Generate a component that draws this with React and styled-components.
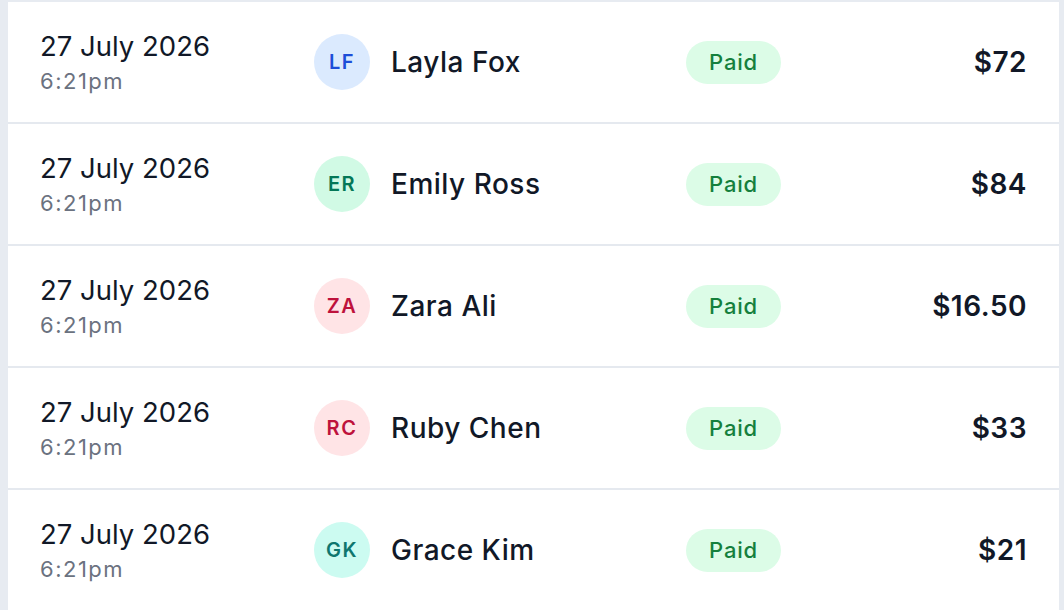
import React from "react";
import styled, { createGlobalStyle } from "styled-components";

const GlobalStyle = createGlobalStyle`
  html, body {
    margin: 0;
    padding: 0;
    background: #e7ebf1;
    font-family: Inter, "Noto Sans", sans-serif;
  }
`;

const Page = styled.div`
  padding: 2px 5px 0 8px;
  height: 610px;
  box-sizing: border-box;
  overflow: hidden;
`;

const Table = styled.div`
  background: #ffffff;
`;

const Row = styled.div`
  display: grid;
  grid-template-columns: 274px 372px 1fr auto;
  align-items: center;
  height: 120px;
  padding: 0 32px;
  border-bottom: 2px solid #e5e9ef;
`;

const DateCell = styled.div`
  display: flex;
  flex-direction: column;
  gap: 4px;
`;

const DateText = styled.span`
  font-size: 27.5px;
  line-height: 34px;
  color: #111827;
  letter-spacing: 0;
`;

const TimeText = styled.span`
  font-size: 22px;
  line-height: 28px;
  color: #6b7280;
  letter-spacing: 1.5px;
`;

const Customer = styled.div`
  display: flex;
  align-items: center;
  gap: 21px;
`;

const Avatar = styled.div`
  width: 56px;
  height: 56px;
  border-radius: 50%;
  display: flex;
  align-items: center;
  justify-content: center;
  font-size: 20px;
  font-weight: 600;
  letter-spacing: 1.5px;
  background: ${(p) => p.$bg};
  color: ${(p) => p.$fg};
`;

const Name = styled.span`
  font-size: 28px;
  font-weight: 500;
  color: #111827;
  letter-spacing: 0.5px;
`;

const Badge = styled.span`
  justify-self: start;
  display: inline-flex;
  align-items: center;
  justify-content: center;
  width: 95px;
  height: 43px;
  border-radius: 22px;
  background: #dcfce7;
  color: #15803d;
  font-size: 22px;
  font-weight: 500;
  letter-spacing: 0.8px;
`;

const Amount = styled.span`
  font-size: 28px;
  font-weight: 600;
  color: #111827;
  text-align: right;
  letter-spacing: 0.5px;
`;

const tones = {
  blue: { bg: "#dbeafe", fg: "#1d4ed8" },
  green: { bg: "#d1fae5", fg: "#047857" },
  rose: { bg: "#ffe4e6", fg: "#be123c" },
  teal: { bg: "#ccfbf1", fg: "#0f766e" },
};

const orders = [
  { initials: "LF", name: "Layla Fox", tone: "blue", amount: "$72" },
  { initials: "ER", name: "Emily Ross", tone: "green", amount: "$84" },
  { initials: "ZA", name: "Zara Ali", tone: "rose", amount: "$16.50" },
  { initials: "RC", name: "Ruby Chen", tone: "rose", amount: "$33" },
  { initials: "GK", name: "Grace Kim", tone: "teal", amount: "$21" },
];

export default function App() {
  return (
    <>
      <GlobalStyle />
      <Page>
        <Table>
          {orders.map((o) => (
            <Row key={o.initials}>
              <DateCell>
                <DateText>27 July 2026</DateText>
                <TimeText>6:21pm</TimeText>
              </DateCell>
              <Customer>
                <Avatar $bg={tones[o.tone].bg} $fg={tones[o.tone].fg}>
                  {o.initials}
                </Avatar>
                <Name>{o.name}</Name>
              </Customer>
              <Badge>Paid</Badge>
              <Amount>{o.amount}</Amount>
            </Row>
          ))}
        </Table>
      </Page>
    </>
  );
}
